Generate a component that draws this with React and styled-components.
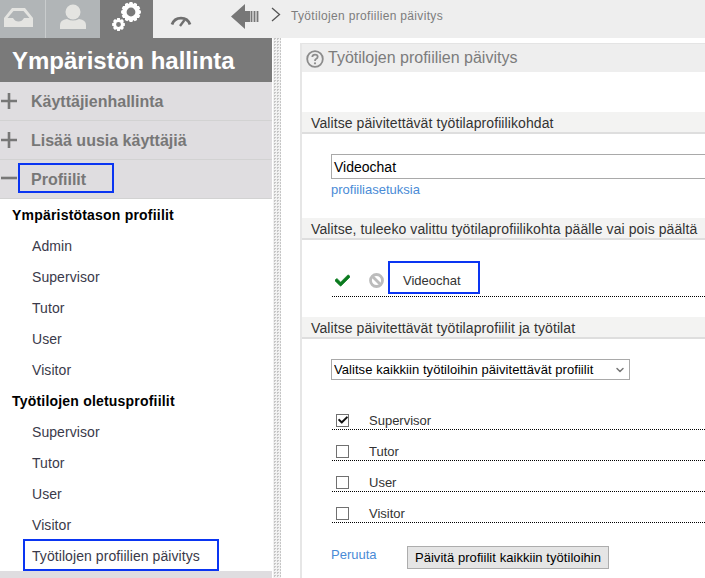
import React from 'react'
import styled, { createGlobalStyle } from 'styled-components'
import { FaCheck } from 'react-icons/fa'
import { ChevronDown } from 'lucide-react'

const GlobalStyle = createGlobalStyle`
    html, body {
        margin: 0;
        padding: 0;
        background: #fff;
        font-family: "Liberation Sans", Arial, sans-serif;
    }
`

const Page = styled.div`
    width: 705px;
    height: 578px;
    overflow: hidden;
    display: flex;
    flex-direction: column;
`
const TopBar = styled.div`
    display: flex;
    height: 38px;
    flex: none;
    background: #eeeeee;
`
const Tab = styled.div`
    width: ${props => props.$width}px;
    height: 38px;
    flex: none;
    box-sizing: border-box;
    background: ${props => props.$active ? '#7a7a7a' : props.$muted ? '#b1b5b7' : 'transparent'};
    border-right: ${props => props.$divider ? '1px solid #c9cccd' : 'none'};
    svg {
        display: block;
    }
`
const BackArrow = styled.svg`
    margin: 4px 0 0 36px;
    flex: none;
`
const Chevron = styled.svg`
    margin: 7px 0 0 11px;
    flex: none;
`
const Crumb = styled.span`
    margin: 9px 0 0 10px;
    font-size: 12px;
    line-height: 14px;
    letter-spacing: 0.33px;
    color: #7d7d7d;
`
const Body = styled.div`
    flex: 1;
    display: flex;
    min-height: 0;
`
const Sidebar = styled.div`
    width: 272px;
    flex: none;
    display: flex;
    flex-direction: column;
`
const SideTitle = styled.div`
    height: 44px;
    flex: none;
    padding-left: 12px;
    box-sizing: border-box;
    background: #7a7a7a;
    color: #fff;
    font-size: 24px;
    font-weight: bold;
    line-height: 45px;
`
const AccordionRow = styled.div`
    position: relative;
    height: 39px;
    flex: none;
    box-sizing: border-box;
    display: flex;
    align-items: center;
    background: #dfdde0;
    border-bottom: 1px solid #d2d2d2;
    color: #777;
    font-size: 16px;
    font-weight: bold;
    line-height: 20px;
`
const RowLabel = styled.span`
    margin-top: 1px;
`
const RowIcon = styled.svg`
    width: 16px;
    height: 16px;
    margin: 0 14px 0 1px;
    flex: none;
`
const SideList = styled.div`
    flex: none;
`
const GroupTitle = styled.div`
    height: 31px;
    padding-left: 12px;
    color: #000;
    font-size: 14px;
    font-weight: bold;
    line-height: 32px;
    letter-spacing: 0.2px;
`
const SideLink = styled.div`
    position: relative;
    height: 31px;
    padding-left: 32px;
    color: #3a3a4a;
    font-size: 14px;
    line-height: 32px;
    letter-spacing: 0.07px;
`
const SideFooter = styled.div`
    flex: 1;
    background: #dfdde0;
`
const Strip = styled.div`
    width: 8px;
    margin-left: 1px;
    flex: none;
    background-color: #f2f2f2;
    background-image: conic-gradient(#c6c6c6 25%, transparent 0);
    background-size: 3px 3px;
`
const Main = styled.div`
    flex: 1;
    min-width: 0;
    margin: 5px 0 0 19px;
    border-left: 2px solid #e6e6e6;
    color: #333;
`
const PanelHeader = styled.div`
    height: 29px;
    display: flex;
    align-items: center;
    background: #eeeeee;
    border-top: 1px solid #e4e4e4;
    box-sizing: border-box;
    color: #7c7c7c;
    font-size: 16px;
    svg {
        margin: 2px 4px 0 4px;
    }
`
const Section = styled.div`
    height: 22px;
    margin-top: ${props => props.$top}px;
    padding-left: 9px;
    background: #f3f3f2;
    border-bottom: 2px solid #dedede;
    box-sizing: border-box;
    color: #333;
    font-size: 14px;
    line-height: 23px;
    letter-spacing: 0.09px;
    white-space: nowrap;
`
const Indented = styled.div`
    padding-left: 29px;
`
const TextInput = styled.div`
    height: 25px;
    margin-top: 20px;
    padding-left: 2px;
    border: 1px solid #a9a9a9;
    border-right: none;
    box-sizing: border-box;
    color: #000;
    font-size: 14px;
    line-height: 25px;
`
const BlueLink = styled.a`
    display: block;
    color: #4a8bd6;
    font-size: 13px;
    line-height: 21px;
`
const StateRow = styled.div`
    position: relative;
    height: 44px;
    margin: 13px 0 0 1px;
    display: flex;
    align-items: center;
    border-bottom: 1px dotted #000;
    box-sizing: border-box;
    font-size: 13px;
    padding-top: 11px;
`
const StateName = styled.span`
    margin-left: 19px;
    color: #333;
`
const BanIcon = styled.svg`
    margin-left: 19px;
`
const SelectWrap = styled.div`
    position: relative;
    width: 299px;
    margin-top: 20px;
    svg {
        position: absolute;
        right: 4px;
        top: 5px;
        pointer-events: none;
    }
`
const Select = styled.select`
    display: block;
    width: 100%;
    height: 21px;
    padding: 0 0 0 2px;
    appearance: none;
    border: 1px solid #a9a9a9;
    border-radius: 0;
    background: #fff;
    color: #000;
    font-family: inherit;
    font-size: 13px;
    letter-spacing: 0.06px;
`
const ProfileList = styled.div`
    margin-top: 19px;
`
const ProfileRow = styled.label`
    height: 31px;
    margin-left: 1px;
    padding: 12px 0 0 4px;
    display: flex;
    align-items: center;
    border-bottom: 1px dotted #000;
    box-sizing: border-box;
    color: #333;
    font-size: 13px;
`
const Tick = styled.span`
    width: 13px;
    height: 13px;
    margin-right: 20px;
    flex: none;
    box-sizing: border-box;
    display: flex;
    align-items: center;
    justify-content: center;
    border: 1px solid #707070;
    background: #fff;
    color: #111;
    font-size: 10px;
`
const Actions = styled.div`
    display: flex;
    margin-top: 23px;
`
const CancelLink = styled(BlueLink)`
    width: 76px;
    font-size: 13px;
    line-height: 17px;
`
const Button = styled.button`
    width: 202px;
    height: 23px;
    padding: 0;
    border: 1px solid #adadad;
    background: #e5e5e5;
    color: #000;
    font-family: inherit;
    font-size: 13px;
    letter-spacing: 0.05px;
`
// sininen kehys kuvakaappauksen paalla
const Mark = styled.div`
    position: absolute;
    left: ${props => props.$left}px;
    top: ${props => props.$top}px;
    width: ${props => props.$width}px;
    height: ${props => props.$height}px;
    border: 2px solid #0a35f2;
    box-sizing: border-box;
    pointer-events: none;
`

const gearPath = (cx, cy, outer, inner, hole, teeth) => {
    let d = ''
    const step = (Math.PI * 2) / teeth
    for (let i = 0; i < teeth; i++) {
        const a = i * step
        const pts = [
            [inner, a - step * 0.5],
            [outer, a - step * 0.25],
            [outer, a + step * 0.25],
            [inner, a + step * 0.5],
        ]
        pts.forEach(([r, t], n) => {
            const x = (cx + r * Math.cos(t)).toFixed(2)
            const y = (cy + r * Math.sin(t)).toFixed(2)
            d += `${i === 0 && n === 0 ? 'M' : 'L'}${x} ${y} `
        })
    }
    d += `Z M${cx + hole} ${cy} A${hole} ${hole} 0 1 0 ${cx - hole} ${cy} A${hole} ${hole} 0 1 0 ${cx + hole} ${cy} Z`
    return d
}

const InboxIcon = () => (
    <svg width="45" height="38" viewBox="0 0 45 38">
        <path
            fill="#e4e4e1"
            fillRule="evenodd"
            d="M4 18 L12 8 H25 L33 18 V27 H4 Z M7.5 18 H13 Q15 21.5 18.5 21.5 Q22 21.5 24 18 H29.5 L23.5 11 H13.5 Z"
        />
    </svg>
)

const UserIcon = () => (
    <svg width="54" height="38" viewBox="0 0 54 38">
        <circle cx="27" cy="12" r="7.5" fill="#e4e4e1" />
        <path fill="#e4e4e1" d="M14 29 V25 Q14 20 21 19 Q27 22 33 19 Q40 20 40 25 V29 Z" />
    </svg>
)

const GearsIcon = () => (
    <svg width="53" height="38" viewBox="0 0 53 38">
        <path fill="#fff" fillRule="evenodd" d={gearPath(31, 12, 10, 8.4, 4.4, 12)} />
        <path fill="#fff" fillRule="evenodd" d={gearPath(18.5, 24.5, 6.5, 5, 2.4, 8)} />
    </svg>
)

const GaugeIcon = () => (
    <svg width="42" height="38" viewBox="0 0 42 38">
        <path d="M19 24.5 A9.5 9.5 0 0 1 37 24.5" fill="none" stroke="#6f6f6f" strokeWidth="2.8" />
        <path d="M27 26 L31.5 20" stroke="#6f6f6f" strokeWidth="2.4" />
    </svg>
)

const Plus = () => (
    <RowIcon viewBox="0 0 16 16">
        <path d="M0 8 H16 M8 0 V16" stroke="#777" strokeWidth="2.6" />
    </RowIcon>
)

const Minus = () => (
    <RowIcon viewBox="0 0 16 16">
        <path d="M0 7 H16" stroke="#777" strokeWidth="2.6" />
    </RowIcon>
)

const HelpIcon = () => (
    <svg width="18" height="18" viewBox="0 0 18 18">
        <circle cx="9" cy="9" r="7.8" fill="none" stroke="#8c8c8c" strokeWidth="1.8" />
        <path d="M6.3 7 Q6.5 4.6 9 4.6 Q11.7 4.6 11.7 6.8 Q11.7 8.2 10 9 Q9 9.5 9 11" fill="none" stroke="#8c8c8c" strokeWidth="1.8" />
        <circle cx="9" cy="13.3" r="1.1" fill="#8c8c8c" />
    </svg>
)

const profiles = ['Supervisor', 'Tutor', 'User', 'Visitor']

const App = () => {
    return (
        <Page>
            <GlobalStyle />
            <TopBar>
                <Tab $width={46} $muted $divider><InboxIcon /></Tab>
                <Tab $width={54} $muted><UserIcon /></Tab>
                <Tab $width={53} $active><GearsIcon /></Tab>
                <Tab $width={42}><GaugeIcon /></Tab>
                <BackArrow width="29" height="25" viewBox="0 0 29 25">
                    <path fill="#777" d="M0 12.5 L14 0 V7 H19 V18 H14 V25 Z" />
                    <path d="M20.5 7 V18 M23.5 7 V18 M26.5 7 V18" stroke="#777" strokeWidth="1.8" />
                </BackArrow>
                <Chevron width="10" height="16" viewBox="0 0 10 16">
                    <path d="M1 1 L8.5 7.5 L1 14" fill="none" stroke="#555" strokeWidth="1.3" />
                </Chevron>
                <Crumb>Työtilojen profiilien päivitys</Crumb>
            </TopBar>
            <Body>
                <Sidebar>
                    <SideTitle>Ympäristön hallinta</SideTitle>
                    <AccordionRow><Plus /><RowLabel>Käyttäjienhallinta</RowLabel></AccordionRow>
                    <AccordionRow><Plus /><RowLabel>Lisää uusia käyttäjiä</RowLabel></AccordionRow>
                    <AccordionRow>
                        <Minus /><RowLabel>Profiilit</RowLabel>
                        <Mark $left={18} $top={3} $width={96} $height={30} />
                    </AccordionRow>
                    <SideList>
                        <GroupTitle>Ympäristötason profiilit</GroupTitle>
                        <SideLink>Admin</SideLink>
                        <SideLink>Supervisor</SideLink>
                        <SideLink>Tutor</SideLink>
                        <SideLink>User</SideLink>
                        <SideLink>Visitor</SideLink>
                        <GroupTitle>Työtilojen oletusprofiilit</GroupTitle>
                        <SideLink>Supervisor</SideLink>
                        <SideLink>Tutor</SideLink>
                        <SideLink>User</SideLink>
                        <SideLink>Visitor</SideLink>
                        <SideLink>
                            Työtilojen profiilien päivitys
                            <Mark $left={23} $top={-1} $width={196} $height={32} />
                        </SideLink>
                    </SideList>
                    <SideFooter />
                </Sidebar>
                <Strip />
                <Main>
                    <PanelHeader><HelpIcon />Työtilojen profiilien päivitys</PanelHeader>
                    <Section $top={40}>Valitse päivitettävät työtilaprofiilikohdat</Section>
                    <Indented>
                        <TextInput>Videochat</TextInput>
                        <BlueLink>profiiliasetuksia</BlueLink>
                    </Indented>
                    <Section $top={18}>Valitse, tuleeko valittu työtilaprofiilikohta päälle vai pois päältä</Section>
                    <Indented>
                        <StateRow>
                            <FaCheck size={15} color="#0a7a1e" stroke="#0a7a1e" strokeWidth={24} style={{ marginLeft: 3 }} />
                            <BanIcon width="15" height="15" viewBox="0 0 15 15">
                                <circle cx="7.5" cy="7.5" r="6" fill="none" stroke="#bcbcbc" strokeWidth="2.8" />
                                <path d="M3.5 3.5 L11.5 11.5" stroke="#bcbcbc" strokeWidth="2.8" />
                            </BanIcon>
                            <StateName>Videochat</StateName>
                            <Mark $left={56} $top={8} $width={92} $height={33} />
                        </StateRow>
                    </Indented>
                    <Section $top={20}>Valitse päivitettävät työtilaprofiilit ja työtilat</Section>
                    <Indented>
                        <SelectWrap>
                            <Select defaultValue="all">
                                <option value="all">Valitse kaikkiin työtiloihin päivitettävät profiilit</option>
                            </Select>
                            <ChevronDown size={12} color="#777" strokeWidth={3} />
                        </SelectWrap>
                        <ProfileList>
                            {profiles.map((name, i) => (
                                <ProfileRow key={name}>
                                    <Tick>{i === 0 && <FaCheck />}</Tick>
                                    {name}
                                </ProfileRow>
                            ))}
                        </ProfileList>
                        <Actions>
                            <CancelLink>Peruuta</CancelLink>
                            <Button>Päivitä profiilit kaikkiin työtiloihin</Button>
                        </Actions>
                    </Indented>
                </Main>
            </Body>
        </Page>
    )
}

export default App
